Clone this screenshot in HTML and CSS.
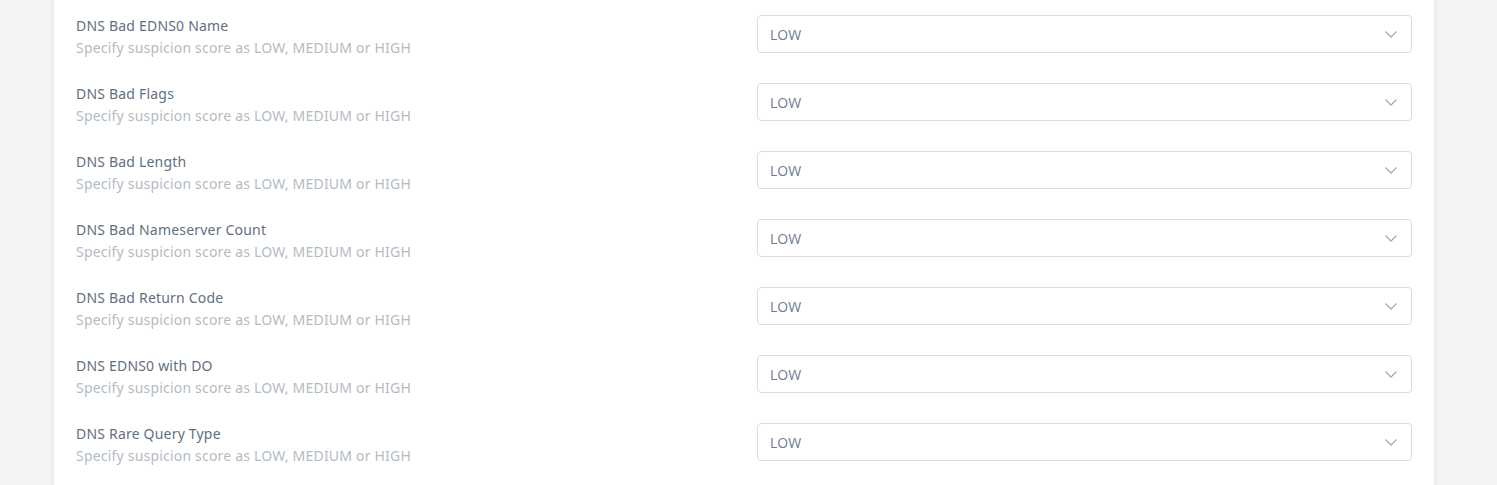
FILE: index.html
```html
<!DOCTYPE html>
<html>
<head>
<meta charset="utf-8">
<link rel="stylesheet" href="styles.css">
</head>
<body>
<div class="page">
  <div class="card">
    <div class="row">
      <div class="label"><div class="name">DNS Bad EDNS0 Name</div><div class="desc">Specify suspicion score as LOW, MEDIUM or HIGH</div></div>
      <div class="select"><span>LOW</span><svg class="chev" width="12" height="7" viewBox="0 0 12 7"><path d="M0.5 0.5 L6 6 L11.5 0.5" fill="none" stroke="#a3adba" stroke-width="1.3"/></svg></div>
    </div>
    <div class="row">
      <div class="label"><div class="name">DNS Bad Flags</div><div class="desc">Specify suspicion score as LOW, MEDIUM or HIGH</div></div>
      <div class="select"><span>LOW</span><svg class="chev" width="12" height="7" viewBox="0 0 12 7"><path d="M0.5 0.5 L6 6 L11.5 0.5" fill="none" stroke="#a3adba" stroke-width="1.3"/></svg></div>
    </div>
    <div class="row">
      <div class="label"><div class="name">DNS Bad Length</div><div class="desc">Specify suspicion score as LOW, MEDIUM or HIGH</div></div>
      <div class="select"><span>LOW</span><svg class="chev" width="12" height="7" viewBox="0 0 12 7"><path d="M0.5 0.5 L6 6 L11.5 0.5" fill="none" stroke="#a3adba" stroke-width="1.3"/></svg></div>
    </div>
    <div class="row">
      <div class="label"><div class="name">DNS Bad Nameserver Count</div><div class="desc">Specify suspicion score as LOW, MEDIUM or HIGH</div></div>
      <div class="select"><span>LOW</span><svg class="chev" width="12" height="7" viewBox="0 0 12 7"><path d="M0.5 0.5 L6 6 L11.5 0.5" fill="none" stroke="#a3adba" stroke-width="1.3"/></svg></div>
    </div>
    <div class="row">
      <div class="label"><div class="name">DNS Bad Return Code</div><div class="desc">Specify suspicion score as LOW, MEDIUM or HIGH</div></div>
      <div class="select"><span>LOW</span><svg class="chev" width="12" height="7" viewBox="0 0 12 7"><path d="M0.5 0.5 L6 6 L11.5 0.5" fill="none" stroke="#a3adba" stroke-width="1.3"/></svg></div>
    </div>
    <div class="row">
      <div class="label"><div class="name">DNS EDNS0 with DO</div><div class="desc">Specify suspicion score as LOW, MEDIUM or HIGH</div></div>
      <div class="select"><span>LOW</span><svg class="chev" width="12" height="7" viewBox="0 0 12 7"><path d="M0.5 0.5 L6 6 L11.5 0.5" fill="none" stroke="#a3adba" stroke-width="1.3"/></svg></div>
    </div>
    <div class="row">
      <div class="label"><div class="name">DNS Rare Query Type</div><div class="desc">Specify suspicion score as LOW, MEDIUM or HIGH</div></div>
      <div class="select"><span>LOW</span><svg class="chev" width="12" height="7" viewBox="0 0 12 7"><path d="M0.5 0.5 L6 6 L11.5 0.5" fill="none" stroke="#a3adba" stroke-width="1.3"/></svg></div>
    </div>
  </div>
</div>
</body>
</html>
```

FILE: styles.css
```css
html, body {
  margin: 0;
  padding: 0;
  background: #f2f3f3;
  height: 485px;
  overflow: hidden;
}
.page {
  padding-left: 54px;
  width: 1380px;
}
.card {
  background: #ffffff;
  box-shadow: 0 0 6px rgba(0, 0, 0, 0.08);
  padding: 15px 22px 30px 22px;
  min-height: 500px;
}
.row {
  display: grid;
  grid-template-columns: 681px 1fr;
  height: 68px;
}
.label {
  font-family: "Noto Sans", sans-serif;
  font-size: 14px;
  line-height: 22px;
  letter-spacing: 0.2px;
}
.name {
  color: #5f6f82;
}
.desc {
  color: #b3bbc5;
}
.select {
  height: 38px;
  box-sizing: border-box;
  border: 1px solid #d9dde2;
  border-radius: 4px;
  display: flex;
  align-items: center;
  justify-content: space-between;
  padding: 0 14px 0 12px;
  font-family: "Open Sans", sans-serif;
  font-size: 14px;
  color: #6e7c8e;
}
.chev {
  display: block;
}
```
